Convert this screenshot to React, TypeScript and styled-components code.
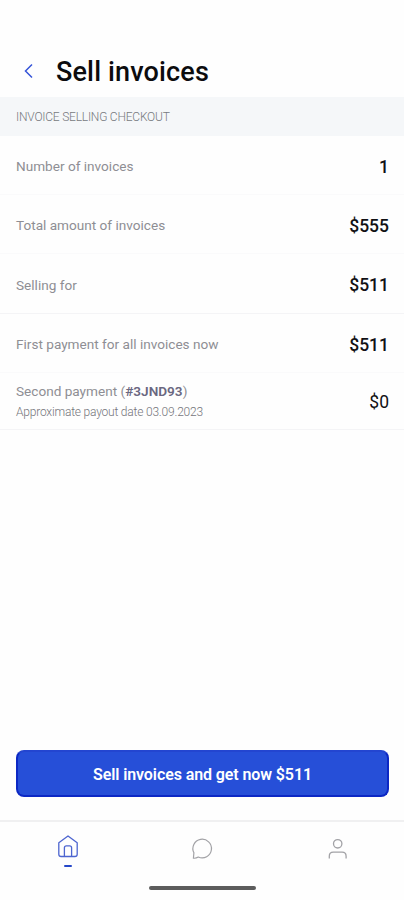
import React from "react";
import styled, { createGlobalStyle } from "styled-components";

const GlobalStyle = createGlobalStyle`
  * { box-sizing: border-box; }
  body { margin: 0; background: #fefefe; font-family: Roboto, "Liberation Sans", sans-serif; }
`;

const Screen = styled.main`
  display: flex;
  flex-direction: column;
  width: 404px;
  height: 900px;
  overflow: hidden;
  background: #fefefe;
`;

const Header = styled.header`
  display: flex;
  align-items: center;
  height: 97px;
  padding: 46px 16px 0 24px;
`;

const BackButton = styled.button`
  display: flex;
  width: 10px;
  height: 16px;
  margin: 0 22px 2px 0;
  padding: 0;
  border: 0;
  background: none;
  color: #3554d8;
`;

const Title = styled.h1`
  margin: 1px 0 0;
  color: #0c0c0e;
  font-size: 27px;
  font-weight: 500;
  line-height: 32px;
  letter-spacing: 0.15px;
`;

const SectionLabel = styled.h2`
  display: flex;
  align-items: center;
  height: 39px;
  margin: 0;
  padding: 1px 16px 0;
  background: #f5f7f9;
  color: #777a80;
  font-size: 12px;
  font-weight: 300;
  letter-spacing: -0.22px;
`;

const Row = styled.div<{ $height: number; $strong?: boolean }>`
  display: flex;
  align-items: center;
  justify-content: space-between;
  height: ${(p) => p.$height}px;
  padding: 2px 15px 0 16px;
  border-bottom: 1px solid ${(p) => (p.$strong ? "#f4f4f6" : "#fafafb")};
`;

const Label = styled.div`
  color: #8e8e94;
  font-size: 13.6px;
  line-height: 20px;
`;

const Reference = styled.strong`
  color: #6a6780;
  font-weight: 600;
`;

const Note = styled.div`
  color: #75757b;
  font-size: 12px;
  font-weight: 300;
  line-height: 22px;
  letter-spacing: -0.2px;
`;

const Amount = styled.div<{ $regular?: boolean }>`
  color: #111114;
  font-size: 17.5px;
  font-weight: ${(p) => (p.$regular ? 400 : 500)};
  line-height: 22px;
  padding-top: ${(p) => (p.$regular ? 0 : 1)}px;
`;

const Footer = styled.div`
  display: flex;
  margin-top: auto;
  padding: 0 15px 23px 16px;
`;

const SellButton = styled.button`
  flex: 1;
  height: 47px;
  padding: 2px 0 0;
  border: 2px solid #0c28c4;
  border-top-color: #2345d0;
  border-radius: 8px;
  background: #264fd8;
  color: #fff;
  font: 600 16px/20px Roboto, sans-serif;
  letter-spacing: -0.1px;
  white-space: nowrap;
`;

const TabBar = styled.nav`
  display: grid;
  grid-template-columns: repeat(3, 1fr);
  height: 60px;
  padding: 13px 0 0 1px;
  border-top: 2px solid #f0f0f1;
`;

const Tab = styled.a<{ $active?: boolean }>`
  display: flex;
  flex-direction: column;
  align-items: center;
  gap: 6px;
  color: ${(p) => (p.$active ? "#4d65d0" : "#a2a2a6")};
  svg { display: block; }
`;

const ActiveMark = styled.span`
  width: 8px;
  height: 2px;
  border-radius: 1px;
  background: #2547c9;
`;

const HomeIndicator = styled.div`
  width: 107px;
  height: 4px;
  margin: 6px auto 10px;
  border-radius: 2px;
  background: #5c5c5c;
  flex-shrink: 0;
`;

const rows = [
  { label: "Number of invoices", amount: "1", height: 59 },
  { label: "Total amount of invoices", amount: "$555", height: 59 },
  { label: "Selling for", amount: "$511", height: 60, strong: true },
  { label: "First payment for all invoices now", amount: "$511", height: 59 },
];

export default function App() {
  return (
    <>
      <GlobalStyle />
      <Screen>
        <Header>
          <BackButton aria-label="Back">
            <svg width="10" height="16" viewBox="0 0 10 16" fill="none" stroke="currentColor" strokeWidth="1.5">
              <path d="M8 1.5 1.5 8 8 14.5" />
            </svg>
          </BackButton>
          <Title>Sell invoices</Title>
        </Header>
        <SectionLabel>INVOICE SELLING CHECKOUT</SectionLabel>
        {rows.map((row) => (
          <Row key={row.label} $height={row.height} $strong={row.strong}>
            <Label>{row.label}</Label>
            <Amount>{row.amount}</Amount>
          </Row>
        ))}
        <Row $height={57} $strong>
          <div>
            <Label>
              Second payment (<Reference>#3JND93</Reference>)
            </Label>
            <Note>Approximate payout date 03.09.2023</Note>
          </div>
          <Amount $regular>$0</Amount>
        </Row>
        <Footer>
          <SellButton>Sell invoices and get now $511</SellButton>
        </Footer>
        <TabBar>
          <Tab $active aria-label="Home">
            <svg width="22" height="24" viewBox="0 0 22 24" fill="none" stroke="currentColor" strokeWidth="1.3" strokeLinejoin="round">
              <path d="M1.8 7.8 11 1l9.2 6.8v11.4q0 2.3-2.3 2.3H4.1q-2.3 0-2.3-2.3Z" />
              <path d="M7.4 21.5V12.8q0-2 2-2h3.2q2 0 2 2v8.7" />
            </svg>
            <ActiveMark />
          </Tab>
          <Tab aria-label="Messages">
            <svg width="22" height="26" viewBox="-1 0 22 26" fill="none" stroke="currentColor" strokeWidth="1.2" strokeLinejoin="round">
              <path d="M1.4 23.2 1.9 17.8A9.3 9.3 0 1 1 6.3 22Q4 23.5 1.4 23.2Z" />
            </svg>
          </Tab>
          <Tab aria-label="Profile">
            <svg width="22" height="26" viewBox="-.7 0 22 26" fill="none" stroke="currentColor" strokeWidth="1.3">
              <circle cx="11" cy="8.8" r="4.2" />
              <path d="M2.6 23.5v-2.3q0-4 4-4h8.8q4 0 4 4v2.3" />
            </svg>
          </Tab>
        </TabBar>
        <HomeIndicator />
      </Screen>
    </>
  );
}
